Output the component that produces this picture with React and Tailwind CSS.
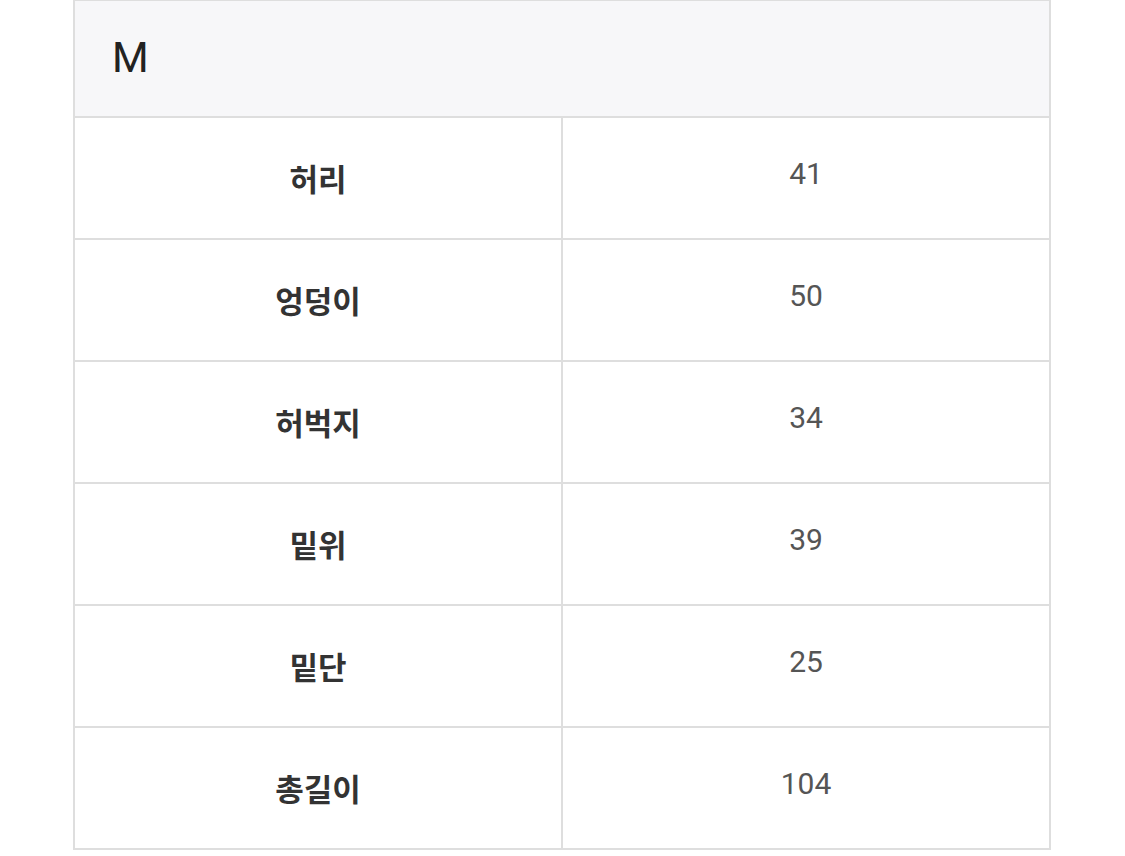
const rows = [
  { label: "허리", value: "41" },
  { label: "엉덩이", value: "50" },
  { label: "허벅지", value: "34" },
  { label: "밑위", value: "39" },
  { label: "밑단", value: "25" },
  { label: "총길이", value: "104" },
];

const App = () => {
  return (
    <div className="w-[1125px] h-[856px] bg-white overflow-hidden font-['Roboto','Noto_Sans_CJK_KR',sans-serif]">
      <div className="ml-[73px] w-[978px] border-x-2 border-b-2 border-t border-[#dedede]">
        {/* size header */}
        <div className="h-[115px] bg-[#f7f7f9] flex items-center pl-[37px]">
          <span className="text-[42px] leading-none text-[#222] pb-[2px]">M</span>
        </div>
        {/* measurements */}
        {rows.map((row, index) => (
          <div key={index} className="flex border-t-2 border-[#dedede] h-[122px]">
            <div className="w-[486px] flex items-center justify-center pb-[2px]">
              <span className="text-[31px] font-bold text-[#333] font-['Noto_Sans_CJK_KR',sans-serif] leading-none">
                {row.label}
              </span>
            </div>
            <div className="w-[2px] bg-[#dedede]" />
            <div className="w-[486px] flex items-center justify-center pb-[8px]">
              <span className="text-[30px] text-[#555] leading-none">{row.value}</span>
            </div>
          </div>
        ))}
      </div>
    </div>
  );
};
export default App;
